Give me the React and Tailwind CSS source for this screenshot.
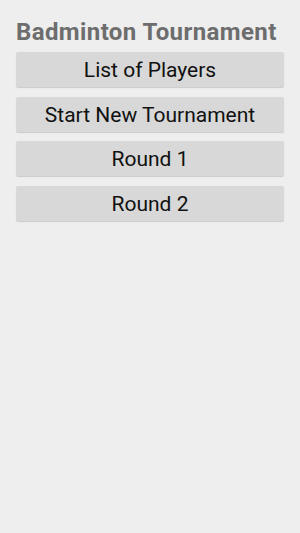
import React from "react";

const items = ["List of Players", "Start New Tournament", "Round 1", "Round 2"];

export default function App() {
  return (
    <div
      className="min-h-[533px] w-[300px] bg-[#eeeeee] px-4 pt-[18px]"
      style={{ fontFamily: "Roboto, 'Liberation Sans', sans-serif" }}
    >
      {/* Title */}
      <h1 className="text-[24px] font-bold leading-[28px] tracking-[0.4px] text-[#6d6d6d]">
        Badminton Tournament
      </h1>

      {/* Menu buttons */}
      <div className="mt-[6px] flex flex-col gap-[9.5px]">
        {items.map((label) => (
          <button
            key={label}
            className="h-[35px] w-full rounded-[2px] bg-[#d7d8d7] pt-[2px] text-[21px] leading-[33px] text-[#111111] shadow-[0_1px_1px_rgba(0,0,0,0.15)]"
          >
            {label}
          </button>
        ))}
      </div>
    </div>
  );
}
